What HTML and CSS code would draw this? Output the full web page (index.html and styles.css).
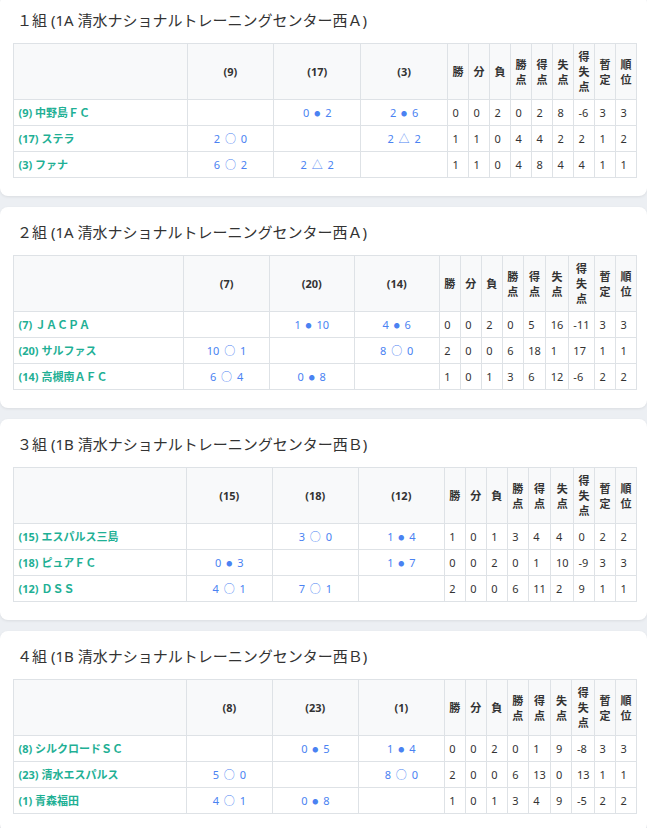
FILE: index.html
```html
<!DOCTYPE html>
<html lang="ja">
<head>
  <meta charset="UTF-8">
  <meta name="viewport" content="width=device-width, initial-scale=1.0">
  <title>予選リーグ</title>
  <link rel="stylesheet" href="styles.css">
</head>
<body>
  <div class="groups">
    <!-- 1組 -->
    <section class="card">
      <h2 class="title">１組 (1A 清水ナショナルトレーニングセンター西Ａ)</h2>
      <table class="league">
        <thead>
          <tr>
            <th class="team-col"></th>
            <th class="vs-col">(9)</th>
            <th class="vs-col">(17)</th>
            <th class="vs-col">(3)</th>
            <th class="stat">勝</th><th class="stat">分</th><th class="stat">負</th>
            <th class="stat">勝点</th><th class="stat">得点</th><th class="stat">失点</th>
            <th class="stat">得失点</th><th class="stat">暫定</th><th class="stat">順位</th>
          </tr>
        </thead>
        <tbody>
          <tr>
            <td class="team">(9) 中野島ＦＣ</td>
            <td class="score"></td><td class="score">0 <span class="dot">●</span> 2</td><td class="score">2 <span class="dot">●</span> 6</td>
            <td>0</td><td>0</td><td>2</td><td>0</td><td>2</td><td>8</td><td>-6</td><td>3</td><td>3</td>
          </tr>
          <tr>
            <td class="team">(17) ステラ</td>
            <td class="score">2 ○ 0</td><td class="score"></td><td class="score">2 △ 2</td>
            <td>1</td><td>1</td><td>0</td><td>4</td><td>4</td><td>2</td><td>2</td><td>1</td><td>2</td>
          </tr>
          <tr>
            <td class="team">(3) ファナ</td>
            <td class="score">6 ○ 2</td><td class="score">2 △ 2</td><td class="score"></td>
            <td>1</td><td>1</td><td>0</td><td>4</td><td>8</td><td>4</td><td>4</td><td>1</td><td>1</td>
          </tr>
        </tbody>
      </table>
    </section>

    <!-- 2組 -->
    <section class="card">
      <h2 class="title">２組 (1A 清水ナショナルトレーニングセンター西Ａ)</h2>
      <table class="league">
        <thead>
          <tr>
            <th class="team-col"></th>
            <th class="vs-col">(7)</th>
            <th class="vs-col">(20)</th>
            <th class="vs-col">(14)</th>
            <th class="stat">勝</th><th class="stat">分</th><th class="stat">負</th>
            <th class="stat">勝点</th><th class="stat">得点</th><th class="stat">失点</th>
            <th class="stat">得失点</th><th class="stat">暫定</th><th class="stat">順位</th>
          </tr>
        </thead>
        <tbody>
          <tr>
            <td class="team">(7) ＪＡＣＰＡ</td>
            <td class="score"></td><td class="score">1 <span class="dot">●</span> 10</td><td class="score">4 <span class="dot">●</span> 6</td>
            <td>0</td><td>0</td><td>2</td><td>0</td><td>5</td><td>16</td><td>-11</td><td>3</td><td>3</td>
          </tr>
          <tr>
            <td class="team">(20) サルファス</td>
            <td class="score">10 ○ 1</td><td class="score"></td><td class="score">8 ○ 0</td>
            <td>2</td><td>0</td><td>0</td><td>6</td><td>18</td><td>1</td><td>17</td><td>1</td><td>1</td>
          </tr>
          <tr>
            <td class="team">(14) 高槻南ＡＦＣ</td>
            <td class="score">6 ○ 4</td><td class="score">0 <span class="dot">●</span> 8</td><td class="score"></td>
            <td>1</td><td>0</td><td>1</td><td>3</td><td>6</td><td>12</td><td>-6</td><td>2</td><td>2</td>
          </tr>
        </tbody>
      </table>
    </section>

    <!-- 3組 -->
    <section class="card">
      <h2 class="title">３組 (1B 清水ナショナルトレーニングセンター西Ｂ)</h2>
      <table class="league">
        <thead>
          <tr>
            <th class="team-col"></th>
            <th class="vs-col">(15)</th>
            <th class="vs-col">(18)</th>
            <th class="vs-col">(12)</th>
            <th class="stat">勝</th><th class="stat">分</th><th class="stat">負</th>
            <th class="stat">勝点</th><th class="stat">得点</th><th class="stat">失点</th>
            <th class="stat">得失点</th><th class="stat">暫定</th><th class="stat">順位</th>
          </tr>
        </thead>
        <tbody>
          <tr>
            <td class="team">(15) エスパルス三島</td>
            <td class="score"></td><td class="score">3 ○ 0</td><td class="score">1 <span class="dot">●</span> 4</td>
            <td>1</td><td>0</td><td>1</td><td>3</td><td>4</td><td>4</td><td>0</td><td>2</td><td>2</td>
          </tr>
          <tr>
            <td class="team">(18) ピュアＦＣ</td>
            <td class="score">0 <span class="dot">●</span> 3</td><td class="score"></td><td class="score">1 <span class="dot">●</span> 7</td>
            <td>0</td><td>0</td><td>2</td><td>0</td><td>1</td><td>10</td><td>-9</td><td>3</td><td>3</td>
          </tr>
          <tr>
            <td class="team">(12) ＤＳＳ</td>
            <td class="score">4 ○ 1</td><td class="score">7 ○ 1</td><td class="score"></td>
            <td>2</td><td>0</td><td>0</td><td>6</td><td>11</td><td>2</td><td>9</td><td>1</td><td>1</td>
          </tr>
        </tbody>
      </table>
    </section>

    <!-- 4組 -->
    <section class="card">
      <h2 class="title">４組 (1B 清水ナショナルトレーニングセンター西Ｂ)</h2>
      <table class="league">
        <thead>
          <tr>
            <th class="team-col"></th>
            <th class="vs-col">(8)</th>
            <th class="vs-col">(23)</th>
            <th class="vs-col">(1)</th>
            <th class="stat">勝</th><th class="stat">分</th><th class="stat">負</th>
            <th class="stat">勝点</th><th class="stat">得点</th><th class="stat">失点</th>
            <th class="stat">得失点</th><th class="stat">暫定</th><th class="stat">順位</th>
          </tr>
        </thead>
        <tbody>
          <tr>
            <td class="team">(8) シルクロードＳＣ</td>
            <td class="score"></td><td class="score">0 <span class="dot">●</span> 5</td><td class="score">1 <span class="dot">●</span> 4</td>
            <td>0</td><td>0</td><td>2</td><td>0</td><td>1</td><td>9</td><td>-8</td><td>3</td><td>3</td>
          </tr>
          <tr>
            <td class="team">(23) 清水エスパルス</td>
            <td class="score">5 ○ 0</td><td class="score"></td><td class="score">8 ○ 0</td>
            <td>2</td><td>0</td><td>0</td><td>6</td><td>13</td><td>0</td><td>13</td><td>1</td><td>1</td>
          </tr>
          <tr>
            <td class="team">(1) 青森福田</td>
            <td class="score">4 ○ 1</td><td class="score">0 <span class="dot">●</span> 8</td><td class="score"></td>
            <td>1</td><td>0</td><td>1</td><td>3</td><td>4</td><td>9</td><td>-5</td><td>2</td><td>2</td>
          </tr>
        </tbody>
      </table>
    </section>
  </div>
</body>
</html>
```

FILE: styles.css
```css
* {
  padding: 0;
  margin: 0;
  box-sizing: border-box;
}

body {
  background-color: #eceff3;
  font-family: "Noto Sans", "Noto Sans CJK JP", sans-serif;
  color: #333;
}

/* 各組のカード */
.groups {
  display: flex;
  flex-direction: column;
  gap: 11px;
  margin-top: -5px;
}

.card {
  padding: 14px 10px 18px 13px;
  background-color: #fff;
  border-radius: 8px;
  box-shadow: 0 1px 3px rgba(0, 0, 0, 0.08);
}

.title {
  margin: 0 0 12px 4px;
  font-size: 15px;
  font-weight: 400;
  line-height: 22px;
  color: #333;
}

/* 星取表 */
.league {
  width: 100%;
  border-collapse: collapse;
  font-size: 11px;
  line-height: 15px;
}

.league th,
.league td {
  border: 1px solid #dee2e6;
  padding: 5px 4.5px;
}

.league th {
  background-color: #f8f9fa;
  font-weight: 700;
  text-align: center;
  vertical-align: middle;
}

.team-col {
  width: 28%;
}

.vs-col {
  width: 14%;
}

.stat {
  width: 1px;
}

.team {
  padding-left: 7px;
  color: #1fb095;
  font-weight: 700;
  white-space: nowrap;
}

.score {
  text-align: center;
  color: #4a82f2;
  word-spacing: 2px;
  white-space: nowrap;
}

/* 負けの印は小さめ */
.dot {
  font-size: 6px;
  line-height: 1;
  vertical-align: 1px;
}
```
